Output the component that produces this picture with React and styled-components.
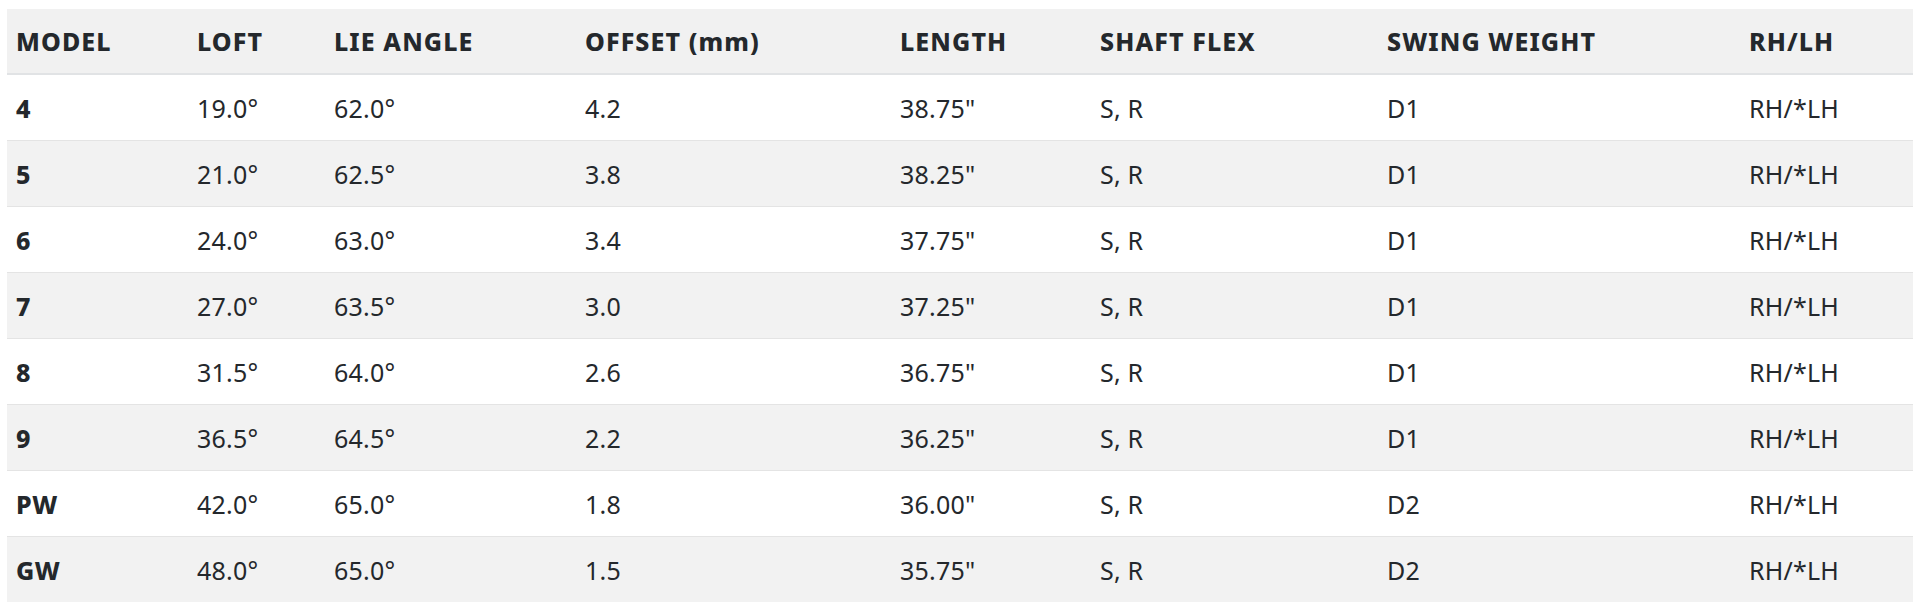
import React from "react";
import styled, { createGlobalStyle } from "styled-components";

const GlobalStyle = createGlobalStyle`
    body {
        margin: 0;
        background: #ffffff;
        font-family: "Noto Sans", "Open Sans", sans-serif;
    }
`;

const Wrapper = styled.div`
    padding: 9px 7px;
`;

const SpecTable = styled.table`
    width: 1906px;
    border-collapse: collapse;
    table-layout: fixed;
    color: #24282c;
    font-size: 25px;
`;

const HeadRow = styled.tr`
    background: #f1f1f1;
    border-bottom: 2px solid #e1e3e5;
`;

const HeadCell = styled.th`
    height: 64px;
    padding: 0 9px;
    text-align: left;
    font-weight: 800;
    letter-spacing: 1.1px;
    white-space: nowrap;
`;

const BodyRow = styled.tr`
    background: ${(p) => (p.$shaded ? "#f2f2f2" : "#ffffff")};
    border-top: 1px solid #e4e4e4;
`;

const Cell = styled.td`
    height: 65px;
    padding: 0 9px;
    font-weight: ${(p) => (p.$strong ? 800 : 400)};
    letter-spacing: ${(p) => (p.$strong ? "0.5px" : "0.2px")};
    white-space: nowrap;
`;

// column widths measured off the reference
const widths = [181, 137, 251, 315, 200, 287, 362, 173];

const headers = [
    "MODEL",
    "LOFT",
    "LIE ANGLE",
    "OFFSET (mm)",
    "LENGTH",
    "SHAFT FLEX",
    "SWING WEIGHT",
    "RH/LH",
];

const rows = [
    ["4", "19.0°", "62.0°", "4.2", '38.75"', "S, R", "D1", "RH/*LH"],
    ["5", "21.0°", "62.5°", "3.8", '38.25"', "S, R", "D1", "RH/*LH"],
    ["6", "24.0°", "63.0°", "3.4", '37.75"', "S, R", "D1", "RH/*LH"],
    ["7", "27.0°", "63.5°", "3.0", '37.25"', "S, R", "D1", "RH/*LH"],
    ["8", "31.5°", "64.0°", "2.6", '36.75"', "S, R", "D1", "RH/*LH"],
    ["9", "36.5°", "64.5°", "2.2", '36.25"', "S, R", "D1", "RH/*LH"],
    ["PW", "42.0°", "65.0°", "1.8", '36.00"', "S, R", "D2", "RH/*LH"],
    ["GW", "48.0°", "65.0°", "1.5", '35.75"', "S, R", "D2", "RH/*LH"],
];

const App = () => {
    return (
        <Wrapper>
            <GlobalStyle />
            <SpecTable>
                <colgroup>
                    {widths.map((w, i) => (
                        <col key={i} style={{ width: w }} />
                    ))}
                </colgroup>
                <thead>
                    <HeadRow>
                        {headers.map((h) => (
                            <HeadCell key={h}>{h}</HeadCell>
                        ))}
                    </HeadRow>
                </thead>
                <tbody>
                    {rows.map((row, i) => (
                        <BodyRow key={row[0]} $shaded={i % 2 === 1}>
                            {row.map((value, j) => (
                                <Cell key={j} $strong={j === 0}>
                                    {value}
                                </Cell>
                            ))}
                        </BodyRow>
                    ))}
                </tbody>
            </SpecTable>
        </Wrapper>
    );
};

export default App;
